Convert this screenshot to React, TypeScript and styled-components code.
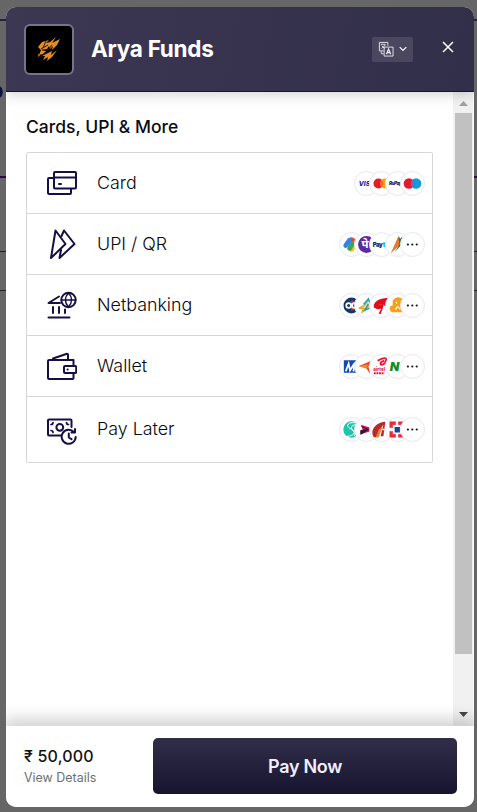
import React from "react";
import styled, { createGlobalStyle } from "styled-components";

const GlobalStyle = createGlobalStyle`
  * { box-sizing: border-box; }
  body { margin: 0; background: #666; font-family: Inter, "Noto Sans", sans-serif; overflow: hidden; }
  button { font-family: inherit; border: 0; padding: 0; cursor: pointer; }
`;

const Backdrop = styled.div`
  height: 812px;
  padding: 7px 3px 5px 6px;
  background:
    radial-gradient(ellipse 3px 6px at 0 92px, #0d1040 75%, transparent) no-repeat,
    linear-gradient(#25233a, #25233a) 0 19px / 100% 2px no-repeat,
    linear-gradient(#2b0848, #2b0848) 0 176px / 100% 2px no-repeat,
    linear-gradient(#222, #222) 0 251px / 100% 1px no-repeat,
    linear-gradient(#222, #222) 0 290px / 100% 1px no-repeat,
    #666;
`;

const Modal = styled.main`
  height: 800px;
  display: flex;
  flex-direction: column;
  border-radius: 10px;
  overflow: hidden;
  background: #fff;
`;

const Header = styled.header`
  height: 85px;
  flex: none;
  z-index: 1;
  display: flex;
  align-items: center;
  padding: 0 19px 0 18px;
  color: #fff;
  background: linear-gradient(100deg, #3c3752, #322f4a);
  border-bottom: 1px solid #17113c;
  box-shadow: 0 3px 12px rgba(0, 0, 0, 0.17);
`;

const LogoFrame = styled.div`
  width: 50px;
  height: 51px;
  border: 2.5px solid #777489;
  border-radius: 6px;
  background: #000;
  display: grid;
  place-items: center;
`;

const Title = styled.h1`
  flex: 1;
  margin: 0 0 1px 17px;
  font-size: 22.5px;
  font-weight: 700;
  line-height: 28px;
  letter-spacing: -0.27px;
`;

const LanguageButton = styled.button`
  width: 41px;
  height: 25px;
  border-radius: 2px;
  background: #4a475f;
  display: flex;
  align-items: center;
  padding: 0 0 1px 6px;
  gap: 5px;
`;

const CloseButton = styled.button`
  margin: 0 0 5px 28px;
  width: 14px;
  height: 14px;
  background: none;
  display: grid;
  place-items: center;
`;

const Body = styled.div`
  flex: 1;
  display: flex;
  min-height: 0;
`;

const Content = styled.section`
  flex: 1;
  padding: 23px 20px 0;
`;

const SectionTitle = styled.h2`
  margin: 0 0 14px;
  font-size: 17.5px;
  font-weight: 500;
  line-height: 23px;
  color: #0b0b12;
`;

const MethodList = styled.div`
  border: 1px solid #d6d6d8;
  border-radius: 2px;
`;

const MethodRow = styled.div<{ $tall?: boolean }>`
  height: ${(p) => (p.$tall ? 65 : 61)}px;
  display: flex;
  align-items: center;
  padding: 0 7px ${(p) => (p.$tall ? 1 : 0)}px 20px;
  border-bottom: ${(p) => (p.$tall ? "0" : "1px solid #d6d6d8")};
`;

const MethodIcon = styled.svg`
  width: 30px;
  height: 32px;
  fill: none;
  stroke: #160f45;
  stroke-width: 2;
  stroke-linejoin: round;
  stroke-linecap: round;
`;

const MethodName = styled.span`
  flex: 1;
  margin-left: 20px;
  font-size: 17.85px;
  font-weight: 300;
  line-height: 24px;
  color: #08080e;
`;

const Badges = styled.div`
  display: flex;
`;

const Badge = styled.svg`
  width: 25px;
  height: 25px;
  flex: none;
  border: 1px solid #e5e8f0;
  border-radius: 50%;
  background: #fff;
  & + & { margin-left: -9.7px; }
`;

const Scrollbar = styled.div`
  width: 21px;
  display: flex;
  flex-direction: column;
  justify-content: space-between;
  align-items: center;
  padding: 9px 0 9px 1px;
  background: #f1f1f1;
  border-right: 1px solid #fafafa;
`;

const Thumb = styled.div`
  width: 17px;
  height: 541px;
  margin-bottom: 52px;
  background: #c1c1c1;
`;

const Footer = styled.footer`
  height: 81px;
  flex: none;
  z-index: 1;
  display: flex;
  align-items: center;
  padding: 0 17px 0 18px;
  background: #fff;
  box-shadow: 0 -4px 15px 3px rgba(0, 0, 0, 0.18);
`;

const Summary = styled.div`
  width: 129px;
`;

const Amount = styled.div`
  font-size: 16px;
  font-weight: 500;
  line-height: 20px;
  letter-spacing: 0.2px;
  color: #111;
`;

const Details = styled.div`
  margin-top: 3px;
  font-size: 12.45px;
  line-height: 18px;
  font-weight: 400;
  color: #6a6f73;
`;

const PayButton = styled.button`
  flex: 1;
  height: 56px;
  margin-bottom: 1px;
  border-radius: 5px;
  color: #f1efff;
  font-size: 18px;
  font-weight: 600;
  letter-spacing: -0.3px;
  background: linear-gradient(#312e49, #17142f);
`;

const icons = {
  card: <><rect x="7" y="5" width="22" height="16.500" rx="1" /><path d="M7 10.500h22M6 11H2a1 1 0 0 0-1 1v14a1 1 0 0 0 1 1h21a1 1 0 0 0 1-1v-4M12 17h2" /></>,
  upi: <><path d="M8.500 2.500 18.500 16 4 30Z" /><path d="m14.500 8 2.500-5.500L27.500 16 12.500 30l1.500-8" /></>,
  bank: <><circle cx="21.500" cy="11" r="7.200" /><path strokeWidth="1.400" d="M14.300 11h14.400M21.500 4c-4 4-4 10 0 14M21.500 4c4 4 4 10 0 14" /><path d="M12 7.500 1.500 14H13M6 18v6M12 18v6M18 20.500v3.500M1.500 28.500h21" /></>,
  wallet: <><path d="M26.500 15v-5H2a1 1 0 0 0-1 1v17a1 1 0 0 0 1 1h23.500a1 1 0 0 0 1-1v-5M6 8.500l14-4.800a1 1 0 0 1 1 1V9" /><rect x="17" y="16" width="12.200" height="7" rx="1" /><path d="M20.500 19.500h.2" /></>,
  later: <><path d="M14 22.500H2a1 1 0 0 1-1-1v-14a1 1 0 0 1 1-1h21.500a1 1 0 0 1 1 1V14" /><circle cx="12.800" cy="14.300" r="3.400" /><path strokeWidth="1.700" d="M4 11.500c1.300 0 2-.7 2-2M4 17.500c1.300 0 2 .7 2 2M21.500 11.500c-1.300 0-2-.7-2-2" /><path d="M28 19.500v-3.500M28 19.500h-3.500M27 19.200a7 7 0 1 0 1.700 4.800M21.800 20.500v4l2.700 1.700" /></>,
};

const logos = {
  visa: <text x="4" y="14.800" fontSize="6.800" fontWeight="800" fontStyle="italic" fill="#101ba8">VIS</text>,
  mastercard: <><circle cx="8.800" cy="12" r="5.200" fill="#e51b29" /><circle cx="15.700" cy="12" r="5.200" fill="#f8a11c" /><path d="M12.200 8.200a5.200 5.200 0 0 1 0 7.600 5.200 5.200 0 0 1 0-7.600" fill="#fc6511" /></>,
  rupay: <text x="3" y="13.900" fontSize="4.800" fontWeight="900" fontStyle="italic" letterSpacing="-.5" fill="#13246b">RuPay</text>,
  maestro: <><circle cx="8.300" cy="12" r="5.500" fill="#e7182e" /><circle cx="15.700" cy="12" r="5.500" fill="#129bdb" /><path d="M12 8a5.500 5.500 0 0 1 0 8 5.500 5.500 0 0 1 0-8" fill="#7569b6" /></>,
  gpay: <g fill="none" strokeWidth="5" strokeLinecap="round"><path d="m12 7 4 2" stroke="#ed4534" /><path d="m16 11-4 6" stroke="#fbbc17" /><path d="m13 11-3 5" stroke="#34a75b" /><path d="M10 7.500 6 13" stroke="#3581e7" /></g>,
  phonepe: <><circle cx="12" cy="12" r="8.800" fill="#5c2ba2" /><text x="6.800" y="16" fontSize="12" fontWeight="700" fontFamily="Noto Sans, sans-serif" fill="#fff">पे</text></>,
  paytm: <><text x="2.800" y="14.500" fontSize="6.300" fontWeight="900" letterSpacing="-.5" fill="#082c73">Pay</text><text x="13.200" y="14.500" fontSize="7" fontWeight="900" fill="#08aef0">t</text></>,
  bhim: <><path d="M13 3 5 21l10-9Z" fill="#ed762a" /><path d="m13 3 1 9-5 8 10-11-2-5-2 2Z" fill="#17803f" /></>,
  csb: <><circle cx="12" cy="12" r="8.300" fill="#163766" /><path d="M13 7v10" stroke="#e5213d" strokeWidth="3" /><g fill="none" stroke="#fff" strokeWidth="1.800"><circle cx="9" cy="12" r="2.500" /><circle cx="15" cy="12" r="2.500" /></g><path d="M17 9h3v6h-3" fill="#e5213d" /></>,
  triangle: <g fill="none" strokeWidth="2"><path d="m4 15 6-3 4-6M4 15l5 0-1 3 7-6" stroke="#e9b329" /><path d="m9 11 5-6 3 9-7 3 4-7" stroke="#2b9bc5" strokeWidth="1.600" /></g>,
  swoosh: <path d="M4 14Q3 8 12 5l7-1-3 9Q13 9 8 12Q15 9 14 13L11 21l-2-1 3-5q-4 2-8-1Z" fill="#e40b1d" />,
  orange: <><path d="M8 7q3-4 7-2l4 2v11H7q-3-1-2-4l3-2Z" fill="#f7a11b" stroke="#f7a11b" strokeWidth="2" strokeLinejoin="round" /><path d="M11 8v2M10 16l2-3 3 3" stroke="#fff" strokeWidth="1.200" fill="none" /></>,
  mobikwik: <><path d="M4 5.500h15v13H4Z" fill="#1549ae" /><path d="m6 17 3-8 1.500 7 5-8-1.500 9" stroke="#fff" strokeWidth="1.900" fill="none" /></>,
  arrow: <><path d="M4 11.500 17 6l-3 6 2 8-4-6Z" fill="#e94a22" /><path d="m4 11.500 9-1.500v4Z" fill="#f18a29" /></>,
  airtel: <><path d="M8 6q9-5 9-1c0 4-6 7-6 4 0-2 4-3 4-3" fill="none" stroke="#e31b35" strokeWidth="2" /><text x="3.500" y="16.500" fontSize="4.700" fontWeight="800" fill="#d91a36">airtel</text><path d="M4 19h11" stroke="#d91a36" strokeWidth="2.200" strokeDasharray="2 .7" /></>,
  newton: <text x="4" y="16.500" fontSize="13" fontWeight="900" fontStyle="italic" fill="#138c24">N</text>,
  simpl: <><circle cx="12" cy="12" r="8.600" fill="#20c4ac" /><path d="M17 5q-9-1-9 3c0 3 7 4 7 7q-1 4-8 4M18 7q-6 0-6 3c0 3 5 5 3 9" fill="none" stroke="#fff" strokeWidth="1" /></>,
  lazypay: <><path d="m6 7 11 3.500v3L6 17l2-5Z" fill="#d2134e" /><path d="m6 13 8-1-8 5ZM7 9l7 3" fill="#371237" stroke="#371237" /></>,
  icici: <><path d="M4 20C-1 13 7 4 16 4l-2 15h-3l3-12c-4 4-3 10-7 13Z" fill="#b8292a" /><path d="m9 12 4-3-4 11H6Z" fill="#ef792a" /><path d="M13 12h2" stroke="#fff" strokeWidth="1.400" /></>,
  kotak: <><path d="M4 4h6v3H7v3H4Zm9 0h7v6h-3V7h-4ZM4 14h3v3h3v3H4Zm13 0h3v6h-7v-3h4Z" fill="#ec2b38" stroke="#ec2b38" strokeWidth=".6" /><path d="M9 9.500h5.500V15H9Z" fill="#184397" /></>,
  more: <g fill="#141414"><circle cx="7.200" cy="12" r="1.150" /><circle cx="11.800" cy="12" r="1.150" /><circle cx="16.400" cy="12" r="1.150" /></g>,
};

type Method = { name: string; icon: keyof typeof icons; brands: (keyof typeof logos)[] };

const methods: Method[] = [
  { name: "Card", icon: "card", brands: ["visa", "mastercard", "rupay", "maestro"] },
  { name: "UPI / QR", icon: "upi", brands: ["gpay", "phonepe", "paytm", "bhim", "more"] },
  { name: "Netbanking", icon: "bank", brands: ["csb", "triangle", "swoosh", "orange", "more"] },
  { name: "Wallet", icon: "wallet", brands: ["mobikwik", "arrow", "airtel", "newton", "more"] },
  { name: "Pay Later", icon: "later", brands: ["simpl", "lazypay", "icici", "kotak", "more"] },
];

export default function App() {
  return (
    <Backdrop>
      <GlobalStyle />
      <Modal>
        <Header>
          <LogoFrame>
            <svg width="45" height="45" viewBox="0 0 45 45" fill="#e08c2b">
              <path d="m11 20 4-5 7-2-3 3 4-1 6-5-4 6 8-4-3 6-5 5 1-4-3 3-1-3-2 3-5 1 4 1-3 3-4 1 2-5Zm4 9 6-3 4-2-1 4 6-5-5 7-5 4 1-4-5 3 2-4Zm-4-2 2 1-1.500 2Z" />
              <path d="m14 22 7-4m-3 9 7-9m-10 5h8m-4-9-3 7" stroke="#1e1204" strokeWidth=".9" />
            </svg>
          </LogoFrame>
          <Title>Arya Funds</Title>
          <LanguageButton aria-label="Language">
            <svg width="16" height="16" viewBox="0 0 17 17" fill="none" stroke="#e8e6f2">
              <path d="M6 10.500H1.500V1.500h9V5" />
              <path d="M3 3.500h5M4 5l3 3M8 4 4 8M3.500 11v2.500H6" />
              <path d="M6.500 6.500h9.500v9.500H6.500Z" />
              <path strokeWidth="1.400" d="m9 14 2.200-5.300L13.500 14m-3.700-1.700h3" />
            </svg>
            <svg width="8" height="6" viewBox="0 0 8 6" fill="none" stroke="#fff" strokeWidth="1.200"><path d="m.7 1.200 3.300 3.300 3.300-3.300" /></svg>
          </LanguageButton>
          <CloseButton aria-label="Close">
            <svg width="12" height="12" viewBox="0 0 12 12" stroke="#fff" strokeWidth="1.500"><path d="m1 1 10 10M11 1 1 11" /></svg>
          </CloseButton>
        </Header>
        <Body>
          <Content>
            <SectionTitle>Cards, UPI &amp; More</SectionTitle>
            <MethodList>
              {methods.map((m) => (
                <MethodRow key={m.name} $tall={m.icon === "later"}>
                  <MethodIcon viewBox="0 0 30 32">{icons[m.icon]}</MethodIcon>
                  <MethodName>{m.name}</MethodName>
                  <Badges>
                    {m.brands.map((b) => <Badge key={b} viewBox="0 0 24 24">{logos[b]}</Badge>)}
                  </Badges>
                </MethodRow>
              ))}
            </MethodList>
          </Content>
          <Scrollbar>
            <svg width="9" height="5" viewBox="0 0 9 5"><path d="m0 5 4.500-5L9 5Z" fill="#a0a0a0" /></svg>
            <Thumb />
            <svg width="9" height="5" viewBox="0 0 9 5"><path d="m0 0 4.500 5L9 0Z" fill="#444" /></svg>
          </Scrollbar>
        </Body>
        <Footer>
          <Summary>
            <Amount>₹ 50,000</Amount>
            <Details>View Details</Details>
          </Summary>
          <PayButton>Pay Now</PayButton>
        </Footer>
      </Modal>
    </Backdrop>
  );
}
